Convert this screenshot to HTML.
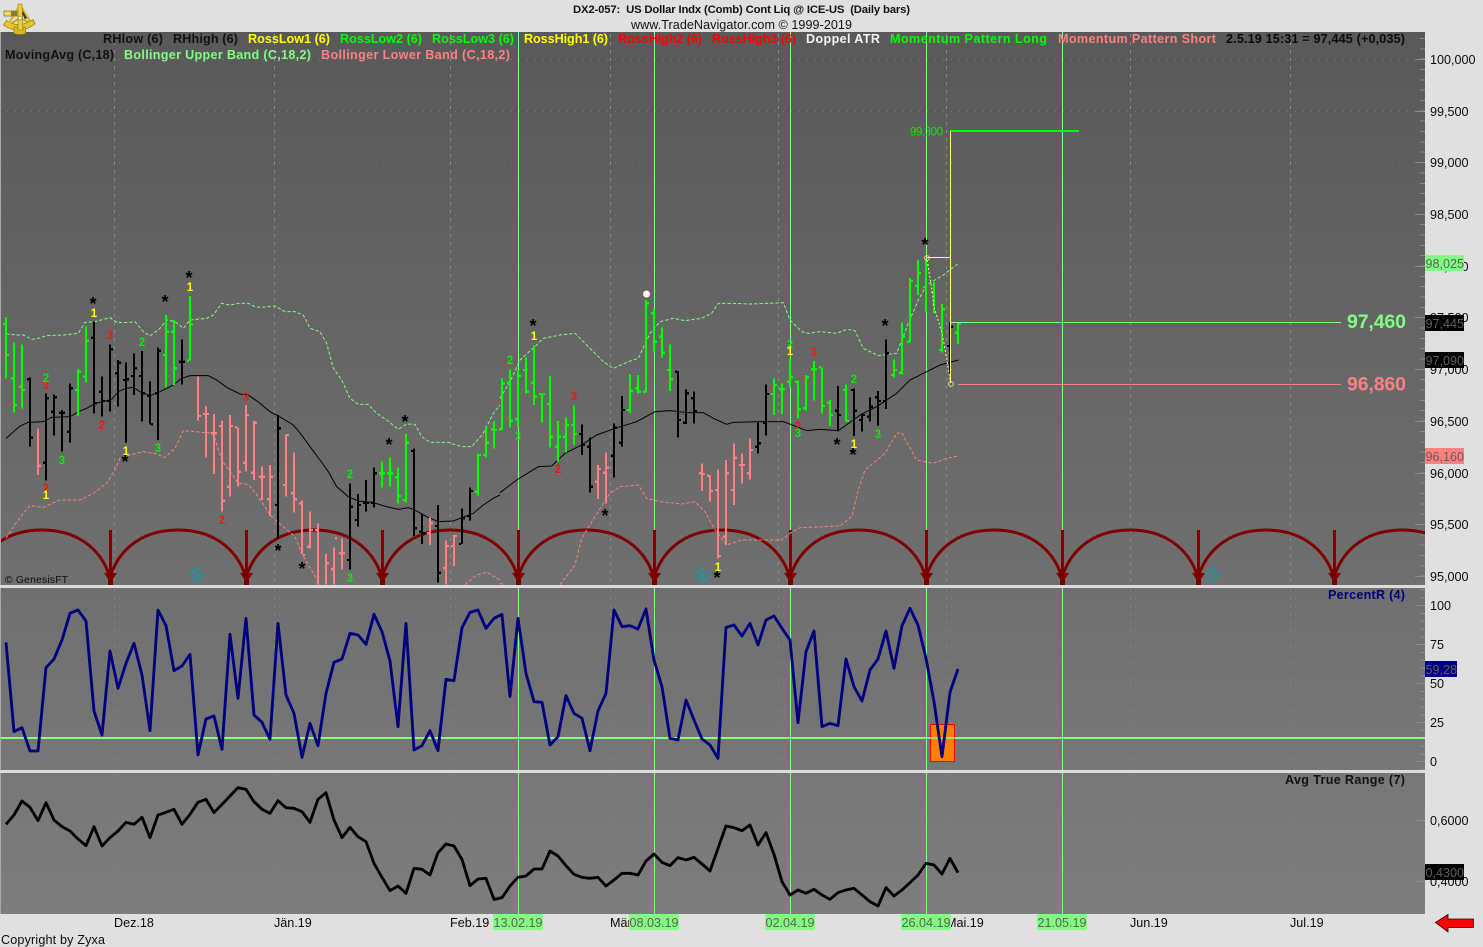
<!DOCTYPE html>
<html lang="en">
<head>
<meta charset="utf-8">
<title>DX2-057 US Dollar Indx Daily bars</title>
<style>
html,body{margin:0;padding:0;background:#e0e0e0;width:1483px;height:947px;overflow:hidden}
svg{display:block;position:absolute;left:0;top:0}
text{font-family:"Liberation Sans",Arial,sans-serif;fill:#000}
.ax{font-size:12.6px;fill:#0a0a0a}
.lg{font-size:12.6px;font-weight:bold}
.fl{font-size:12.6px;fill:#5e5e5e}
.dt{font-size:12.6px;fill:#5e5e5e;text-anchor:middle}
.st{font-size:18px;font-weight:bold;fill:#000;text-anchor:middle}
.d{font-size:11.5px;font-weight:bold;text-anchor:middle}
.y{fill:#ffff00}.g{fill:#00f000}.r{fill:#ff1010}
</style>
</head>
<body>
<svg width="1483" height="947" viewBox="0 0 1483 947" xmlns="http://www.w3.org/2000/svg">
<defs>
<linearGradient id="bg" x1="0" y1="32" x2="0" y2="914" gradientUnits="userSpaceOnUse">
<stop offset="0" stop-color="#595959"/><stop offset="1" stop-color="#7d7d7d"/>
</linearGradient>
<clipPath id="p1"><rect x="1" y="32" width="1424" height="553"/></clipPath>
<path id="a" d="M109 530h3v43h5l-4 6v6h-5v-6l-4-6h5z" fill="#800000"/>
</defs>
<rect width="1483" height="947" fill="#e0e0e0"/>
<rect x="0" y="32" width="1" height="882" fill="#a8a8a8"/>
<rect x="1" y="32" width="1424" height="882" fill="url(#bg)"/>

<!-- grid -->
<g fill="none" stroke="#7c7c7c" stroke-dasharray="1 7" shape-rendering="crispEdges">
<path d="M7 59.5H1415M7 111.5H1415M7 162.5H1415M7 214.5H1415M7 266.5H1415M7 317.5H1415M7 369.5H1415M7 421.5H1415M7 473.5H1415M7 524.5H1415M7 576.5H1415"/>
<path stroke="#7e7e7e" d="M7 605.5H1415M7 644.5H1415M7 683.5H1415M7 722.5H1415M7 761.5H1415"/>
<path stroke="#828282" d="M7 820.5H1415"/>
</g>
<g fill="none" stroke="#8c8c8c" stroke-dasharray="3 5" shape-rendering="crispEdges">
<path d="M114.5 34V585M274.5 34V585M450.5 34V585M610.5 34V585M778.5 34V585M946.5 34V585M1130.5 34V585M1290.5 34V585"/>
<path stroke="#808080" d="M114.5 589V770M274.5 589V770M450.5 589V770M610.5 589V770M778.5 589V770M946.5 589V770M1130.5 589V770M1290.5 589V770"/>
<path stroke="#828282" d="M114.5 773V914M274.5 773V914M450.5 773V914M610.5 773V914M778.5 773V914M946.5 773V914M1130.5 773V914M1290.5 773V914"/>
</g>
<g fill="none" stroke="#8c8c8c" shape-rendering="crispEdges">
<path d="M1415 59.5H1425M1415 111.5H1425M1415 162.5H1425M1415 214.5H1425M1415 266.5H1425M1415 317.5H1425M1415 369.5H1425M1415 421.5H1425M1415 473.5H1425M1415 524.5H1425M1415 576.5H1425M1415 605.5H1425M1415 644.5H1425M1415 683.5H1425M1415 722.5H1425M1415 761.5H1425M1415 820.5H1425M1415 881.5H1425"/>
<path stroke-width="5" stroke-dasharray="1 9.34" d="M1422.5 38V585"/>
<path stroke-width="5" stroke-dasharray="1 6.8" d="M1422.5 589.5V770"/>
</g>

<!-- event lines -->
<path d="M518.5 32V914M654.5 32V914M790.5 32V914M926.5 32V914M1062.5 32V914" stroke="#80ff80" fill="none" shape-rendering="crispEdges"/>

<g clip-path="url(#p1)">
<!-- arcs -->
<path fill="none" stroke="#800000" stroke-width="3" d="M110 578c-6-22-26-48-68-48s-62 26-68 48M246 578c-6-22-26-48-68-48s-62 26-68 48M382 578c-6-22-26-48-68-48s-62 26-68 48M518 578c-6-22-26-48-68-48s-62 26-68 48M654 578c-6-22-26-48-68-48s-62 26-68 48M790 578c-6-22-26-48-68-48s-62 26-68 48M926 578c-6-22-26-48-68-48s-62 26-68 48M1062 578c-6-22-26-48-68-48s-62 26-68 48M1198 578c-6-22-26-48-68-48s-62 26-68 48M1334 578c-6-22-26-48-68-48s-62 26-68 48M1470 578c-6-22-26-48-68-48s-62 26-68 48"/>
<use href="#a"/><use href="#a" x="136"/><use href="#a" x="272"/><use href="#a" x="408"/><use href="#a" x="544"/><use href="#a" x="680"/><use href="#a" x="816"/><use href="#a" x="952"/><use href="#a" x="1088"/><use href="#a" x="1224"/>

<!-- left half: zoom coordinates -->
<g transform="translate(0 290) scale(.33333)" fill="none">
<polyline stroke="#80ff80" stroke-width="3" stroke-dasharray="10 6" points="18,132 50,135 70,135 95,148 115,145 140,137 190,135 235,130 255,97 285,95 330,83 350,97 385,98 405,95 430,125 450,138 480,115 500,90 525,95 550,115 570,90 620,85 640,75 665,40 690,45 715,40 745,40 765,50 785,52 825,48 855,65 885,65 910,75 930,115 960,125 980,160 1000,235 1025,270 1050,325 1075,343 1105,343 1130,370 1160,390 1195,418 1220,402 1245,403 1265,440 1290,457 1345,457 1385,470 1415,470 1450,430 1480,370 1500,345"/>
<polyline stroke="#ff8080" stroke-width="3" stroke-dasharray="10 6" points="18,745 40,710 70,670 90,647 130,652 180,630 240,630 280,610 320,580 345,540 360,505 400,492 430,485 470,492 495,503 525,475 550,422 610,427 640,430 665,510 690,545 715,580 745,583 775,620 810,675 850,710 885,740 905,790 940,850 960,884"/>
<polyline stroke="#ff8080" stroke-width="3" stroke-dasharray="10 6" points="1395,884 1430,855 1460,847 1500,870"/>
<polyline stroke="#000" stroke-width="3" points="18,445 35,430 60,408 85,397 130,395 155,382 210,380 235,365 260,355 285,340 310,335 335,328 355,305 378,295 400,292 420,305 450,317 480,305 520,285 545,265 570,257 625,257 650,270 680,292 720,312 745,315 780,340 810,365 835,378 880,405 905,435 930,470 960,510 985,545 1010,590 1045,620 1075,633 1120,638 1160,650 1195,658 1225,653 1245,660 1280,680 1315,695 1360,693 1385,683 1420,670 1450,645 1480,625 1500,615"/>
<g stroke-width="6.6" shape-rendering="crispEdges">
<path stroke="#ff8080" d="M114 415V555M117 527h6M594 260V392M597 378h6M618 348V503M609 372h6M621 372h6M642 372V552M633 430h6M645 430h6M666 392V665M657 408h6M669 632h6M690 375V620M681 590h6M693 408h6M714 412V590M705 412h6M717 545h6M738 345V545M729 518h6M741 375h6M762 393V570M753 548h6M765 398h6M786 530V630M777 560h6M789 560h6M810 525V678M801 628h6M813 560h6M858 433V620M849 585h6M861 435h6M882 487V668M873 610h6M885 628h6M906 632V792M897 640h6M909 795h6M930 665V775M921 770h6M933 720h6M954 700V884M945 720h6M978 792V884M981 820h6M1002 772V884M993 838h6M1005 745h6M1026 745V838M1017 790h6M1029 790h6M1290 682V765M1293 700h6M1281 730h6M1338 752V884M1329 835h6M1341 768h6M1362 735V828M1353 768h6M1365 738h6"/>
<path stroke="#00ff00" d="M18 82V265M9 102h6M21 195h6M42 157V368M33 265h6M45 345h6M66 163V356M57 290h6M69 300h6M234 238V378M225 300h6M237 245h6M258 110V278M249 260h6M261 152h6M498 75V293M489 195h6M501 125h6M522 90V285M513 125h6M525 235h6M570 18V212M561 212h6M573 103h6M1146 515V593M1137 550h6M1149 550h6M1170 502V590M1161 550h6M1173 550h6M1194 533V640M1185 562h6M1197 618h6M1218 432V638M1209 630h6M1221 458h6M1434 490V617M1425 605h6M1437 495h6M1458 408V502M1449 495h6M1461 458h6M1482 395V475M1473 418h6M1485 420h6"/>
<path stroke="#000" d="M90 262V470M81 268h6M93 443h6M138 310V572M129 518h6M141 325h6M162 313V437M153 365h6M165 322h6M186 360V485M177 368h6M189 368h6M210 280V458M201 425h6M213 295h6M282 95V370M273 143h6M285 340h6M306 260V380M297 305h6M309 333h6M330 163V365M321 333h6M333 178h6M354 210V350M345 250h6M357 218h6M378 217V458M369 270h6M381 268h6M402 190V315M393 258h6M405 235h6M426 183V395M417 258h6M429 310h6M450 275V403M441 318h6M453 403h6M474 172V450M465 310h6M477 182h6M546 148V283M537 215h6M549 215h6M834 375V745M825 645h6M837 415h6M1050 580V838M1041 810h6M1053 650h6M1074 612V710M1065 690h6M1077 645h6M1098 570V665M1089 638h6M1101 638h6M1122 532V653M1113 638h6M1125 550h6M1242 475V738M1233 483h6M1245 715h6M1266 672V762M1257 725h6M1269 730h6M1314 645V878M1305 708h6M1317 848h6M1386 655V762M1377 762h6M1389 685h6M1410 592V692M1401 678h6M1413 603h6"/>
</g>
</g>

<!-- right half: zoom coordinates -->
<g transform="translate(500 290) scale(.33333)" fill="none">
<polyline stroke="#80ff80" stroke-width="3" stroke-dasharray="10 6" points="0,325 30,275 60,210 110,165 130,145 180,135 225,130 265,170 310,215 340,235 385,215 415,205 450,130 480,95 520,85 555,92 605,85 635,70 655,40 700,40 750,42 850,38 870,90 905,125 925,130 960,125 1010,130 1040,118 1065,122 1090,175 1135,197 1190,190 1225,100 1255,30 1280,-15 1330,-45 1375,-80"/>
<polyline stroke="#ff8080" stroke-width="3" stroke-dasharray="10 6" points="0,880 15,884"/>
<polyline stroke="#ff8080" stroke-width="3" stroke-dasharray="10 6" points="180,884 225,825 245,745 285,680 330,610 360,590 415,585 440,625 480,635 545,642 585,635 615,665 645,720 680,765 725,750 845,750 870,730 900,713 1020,708 1055,680 1075,600 1095,540 1155,490 1190,430 1205,428 1250,510 1300,520 1340,505 1375,498"/>
<polyline stroke="#000" stroke-width="3" points="0,608 50,570 115,530 155,528 195,490 245,465 290,435 345,415 410,395 465,365 510,362 560,368 610,368 640,385 680,403 700,397 780,395 850,395 890,410 920,422 960,418 1015,422 1085,372 1130,350 1190,310 1230,270 1280,245 1320,225 1375,210"/>
<g stroke-width="6.6" shape-rendering="crispEdges">
<path stroke="#ff8080" d="M294 525V627M285 575h6M297 537h6M318 487V640M309 548h6M321 533h6M606 520V603M597 550h6M609 552h6M630 555V635M621 557h6M633 603h6M654 538V805M645 600h6M657 798h6M678 510V765M669 740h6M681 550h6M702 460V645M693 600h6M705 503h6M726 490V580M717 525h6M729 525h6M750 445V568M741 550h6M753 480h6"/>
<path stroke="#00ff00" d="M6 265V420M-3 418h6M9 280h6M30 238V412M21 278h6M33 392h6M54 240V412M45 388h6M57 257h6M78 203V310M69 240h6M81 305h6M102 167V345M93 278h6M105 320h6M126 310V398M117 312h6M129 312h6M150 258V473M141 342h6M153 440h6M174 393V515M165 470h6M177 440h6M198 382V487M189 440h6M201 405h6M222 346V465M213 405h6M225 432h6M390 252V368M381 360h6M393 302h6M414 255V310M405 295h6M417 305h6M438 30V308M429 305h6M441 40h6M462 55V186M453 70h6M465 155h6M486 112V203M477 140h6M489 188h6M510 163V303M501 240h6M513 268h6M822 265V375M813 312h6M825 285h6M846 280V372M837 298h6M849 298h6M870 207V292M861 275h6M873 262h6M894 272V385M885 275h6M897 358h6M918 255V362M909 355h6M921 262h6M942 213V332M933 238h6M945 238h6M966 232V370M957 232h6M969 348h6M990 330V408M981 338h6M993 375h6M1038 283V395M1029 300h6M1041 393h6M1182 208V262M1173 255h6M1185 240h6M1206 97V253M1197 248h6M1209 140h6M1230 -36V157M1221 155h6M1233 -27h6M1254 -90V15M1245 -12h6M1257 -51h6M1278 -90V66M1269 -9h6M1281 -75h6M1302 -24V70M1293 6h6M1326 42V188M1317 180h6M1329 58h6M1374 98V162M1365 128h6M1377 100h6"/>
<path stroke="#000" d="M246 403V495M237 432h6M249 465h6M270 442V608M261 470h6M273 590h6M342 400V563M333 497h6M345 413h6M366 318V470M357 458h6M369 360h6M534 243V443M525 245h6M537 390h6M558 298V402M549 398h6M561 310h6M582 305V400M573 325h6M585 363h6M774 397V490M765 470h6M777 460h6M798 283V437M789 398h6M801 312h6M1014 288V425M1005 362h6M1017 375h6M1062 295V438M1053 300h6M1065 362h6M1086 370V425M1077 390h6M1089 375h6M1110 322V395M1101 380h6M1113 350h6M1134 303V407M1125 322h6M1137 333h6M1158 148V357M1149 333h6M1161 190h6M1350 97V255M1341 168h6M1353 110h6"/>
</g>
</g>
</g>

<!-- projection lines -->
<path d="M950 131H1079" stroke="#00ff00" stroke-width="2" fill="none" shape-rendering="crispEdges"/>
<path d="M950.5 131V383M927 257.5H950" stroke="#ffff80" fill="none" shape-rendering="crispEdges"/>
<path d="M950 322.5H1341" stroke="#80ff80" fill="none" shape-rendering="crispEdges"/>
<path d="M958 384.5H1341" stroke="#ff8080" fill="none" shape-rendering="crispEdges"/>
<polyline points="927,260 932,290 934,307 942,333 947,360 950,380" fill="none" stroke="#ffff80" stroke-dasharray="2 2"/>
<circle cx="927" cy="258" r="2.4" fill="none" stroke="#e8e878"/>
<circle cx="951" cy="384" r="2.4" fill="none" stroke="#e8e878"/>
<circle cx="646.5" cy="294" r="3.5" fill="#fff"/>
<text x="910" y="135.500" textLength="33" style="font-size:11.500px;fill:#00f000">99,300</text>

<!-- digits -->
<g>
<text class="d r" x="46" y="389">3</text>
<text class="d r" x="110" y="339">3</text>
<text class="d r" x="246" y="401">3</text>
<text class="d r" x="102" y="429">2</text>
<text class="d r" x="46" y="492">2</text>
<text class="d r" x="222" y="524">2</text>
<text class="d r" x="574" y="400">3</text>
<text class="d r" x="814" y="356">3</text>
<text class="d r" x="558" y="473">2</text>
<text class="d r" x="798" y="430">2</text>
<text class="d g" x="46" y="382">2</text>
<text class="d g" x="142" y="346">2</text>
<text class="d g" x="350" y="478">2</text>
<text class="d g" x="510" y="364">2</text>
<text class="d g" x="790" y="348">2</text>
<text class="d g" x="854" y="383">2</text>
<text class="d g" x="62" y="464">3</text>
<text class="d g" x="158" y="452">3</text>
<text class="d g" x="350" y="582">3</text>
<text class="d g" x="518" y="440">3</text>
<text class="d g" x="798" y="437">3</text>
<text class="d g" x="878" y="438">3</text>
<text class="st" x="93" y="310">*</text>
<text class="st" x="165" y="308">*</text>
<text class="st" x="189" y="284">*</text>
<text class="st" x="125" y="468">*</text>
<text class="st" x="278" y="557">*</text>
<text class="st" x="302" y="575">*</text>
<text class="st" x="389" y="451">*</text>
<text class="st" x="405" y="428">*</text>
<text class="st" x="533" y="332">*</text>
<text class="st" x="605" y="522">*</text>
<text class="st" x="837" y="451">*</text>
<text class="st" x="853" y="461">*</text>
<text class="st" x="885" y="332">*</text>
<text class="st" x="717" y="584">*</text>
<text class="st" x="925" y="251">*</text>
<text class="d y" x="94" y="317">1</text>
<text class="d y" x="190" y="291">1</text>
<text class="d y" x="46" y="499">1</text>
<text class="d y" x="126" y="455">1</text>
<text class="d y" x="534" y="340">1</text>
<text class="d y" x="790" y="355">1</text>
<text class="d y" x="854" y="448">1</text>
<text class="d y" x="718" y="571">1</text>
</g>

<!-- diamonds -->
<g fill="none" stroke="#00a8b4">
<path d="M197 567.5l7.5 7.5-7.5 7.5-7.5-7.5z"/>
<path d="M702 567.5l7.5 7.5-7.5 7.5-7.5-7.5z"/>
<path d="M1213 567.5l7.5 7.5-7.5 7.5-7.5-7.5z"/>
</g>
<g style="font-size:10px;text-anchor:middle">
<text x="197" y="579" style="fill:#00a8b4;font-family:'Liberation Serif',serif">R</text>
<text x="702" y="579" style="fill:#00a8b4;font-family:'Liberation Serif',serif">R</text>
<text x="1213" y="579" style="fill:#00a8b4">?</text>
</g>
<text x="5" y="583" textLength="63" style="font-size:10.300px;fill:#0c0c0c">© GenesisFT</text>

<!-- legend -->
<text class="lg" x="103" y="43" textLength="60" style="fill:#111">RHlow (6)</text>
<text class="lg" x="173" y="43" textLength="65" style="fill:#111">RHhigh (6)</text>
<text class="lg" x="248" y="43" textLength="82" style="fill:#ffff00">RossLow1 (6)</text>
<text class="lg" x="340" y="43" textLength="82" style="fill:#00ff00">RossLow2 (6)</text>
<text class="lg" x="432" y="43" textLength="82" style="fill:#00ff00">RossLow3 (6)</text>
<text class="lg" x="524" y="43" textLength="84" style="fill:#ffff00">RossHigh1 (6)</text>
<text class="lg" x="618" y="43" textLength="84" style="fill:#ff0000">RossHigh2 (6)</text>
<text class="lg" x="712" y="43" textLength="84" style="fill:#ff0000">RossHigh3 (6)</text>
<text class="lg" x="806" y="43" textLength="74" style="fill:#f4f4f4">Doppel ATR</text>
<text class="lg" x="890" y="43" textLength="157" style="fill:#00ff00">Momentum Pattern Long</text>
<text class="lg" x="1058" y="43" textLength="158" style="fill:#ff8080">Momentum Pattern Short</text>
<text class="lg" x="1226" y="43" textLength="179" style="fill:#0a0a0a">2.5.19 15:31 = 97,445 (+0,035)</text>
<text class="lg" x="5" y="59" textLength="109" style="fill:#111">MovingAvg (C,18)</text>
<text class="lg" x="124" y="59" textLength="187" style="fill:#80ff80">Bollinger Upper Band (C,18,2)</text>
<text class="lg" x="321" y="59" textLength="189" style="fill:#ff8080">Bollinger Lower Band (C,18,2)</text>

<!-- big values -->
<text x="1347" y="328" textLength="59" style="font-size:19.5px;font-weight:bold;fill:#80ff80">97,460</text>
<text x="1347" y="390.5" textLength="59" style="font-size:19.5px;font-weight:bold;fill:#ff8080">96,860</text>

<!-- pane 2 -->
<path d="M1 738H1425" stroke="#80ff80" stroke-width="2" fill="none" shape-rendering="crispEdges"/>
<rect x="930.5" y="724.5" width="24" height="37" fill="#ff8000" stroke="#ff0000"/>
<path d="M926 738H958" stroke="#80ff80" stroke-width="2" fill="none" opacity=".8" shape-rendering="crispEdges"/>
<g transform="translate(0 585) scale(.33333)" fill="none" stroke="#000080" stroke-width="8.6" stroke-linejoin="round">
<polyline points="18,172 42,440 66,428 90,498 114,498 138,248 162,222 186,165 210,85 234,75 258,108 282,378 306,450 330,198 354,310 378,235 402,175 426,270 450,437 474,75 498,122 522,257 546,243 570,208 594,510 618,402 642,393 666,493 690,148 714,340 738,100 762,390 786,412 810,463 834,115 858,330 882,385 906,517 930,415 954,482 978,325 1002,232 1026,222 1050,145 1074,150 1098,178 1122,88 1146,140 1170,228 1194,425 1218,115 1242,495 1266,482 1290,437 1314,497 1338,283 1362,287 1386,128 1410,82 1434,75 1458,130 1482,100 1506,88 1530,335 1554,100 1578,265 1602,350 1626,352 1650,480 1674,455 1698,332 1722,385 1746,400 1770,497 1794,378 1818,325 1842,75 1866,125 1890,122 1914,132 1938,72 1962,225 1986,305 2010,460 2034,465 2058,345 2082,405 2106,462 2130,480 2154,520 2178,127 2202,120 2226,153 2250,115 2274,180 2298,105 2322,93 2346,130 2370,165 2394,413 2418,200 2442,138 2466,425 2490,415 2514,422 2538,222 2562,305 2586,348 2610,255 2634,222 2658,138 2682,250 2706,122 2730,70 2754,120 2778,220 2802,350 2826,515 2850,322 2874,252"/>
</g>
<!-- pane 3 -->
<g transform="translate(0 770) scale(.33333)" fill="none" stroke="#000" stroke-width="8.6" stroke-linejoin="round">
<polyline points="18,163 42,135 66,93 90,112 114,152 138,98 162,150 186,170 210,183 234,207 258,227 282,170 306,228 330,203 354,183 378,157 402,163 426,142 450,203 474,135 498,127 522,118 546,163 570,133 594,97 618,88 642,128 666,103 690,78 714,53 738,58 762,95 786,118 810,130 834,92 858,113 882,115 906,125 930,157 954,88 978,68 1002,150 1026,203 1050,172 1074,200 1098,215 1122,280 1146,322 1170,362 1194,348 1218,370 1242,295 1266,298 1290,315 1314,248 1338,222 1362,228 1386,268 1410,347 1434,327 1458,325 1482,388 1506,383 1530,348 1554,322 1578,318 1602,297 1626,297 1650,243 1674,258 1698,287 1722,313 1746,322 1770,325 1794,322 1818,348 1842,330 1866,310 1890,310 1914,315 1938,273 1962,252 1986,277 2010,287 2034,263 2058,270 2082,262 2106,282 2130,303 2154,235 2178,168 2202,173 2226,182 2250,165 2274,225 2298,188 2322,253 2346,335 2370,375 2394,360 2418,370 2442,358 2466,375 2490,388 2514,368 2538,360 2562,355 2586,375 2610,395 2634,408 2658,353 2682,378 2706,360 2730,338 2754,315 2778,280 2802,285 2826,312 2850,265 2874,308"/>
</g>

<text class="lg" x="1328" y="599" textLength="77" style="fill:#000080">PercentR (4)</text>
<text class="lg" x="1285" y="784" textLength="120" style="fill:#111">Avg True Range (7)</text>

<!-- separators -->
<rect x="0" y="585" width="1425" height="3" fill="#dcdcdc"/>
<rect x="0" y="770" width="1425" height="3" fill="#dcdcdc"/>

<!-- axis labels -->
<g class="ax">
<text class="ax" x="1430" y="64">100,000</text>
<text class="ax" x="1430" y="116">99,500</text>
<text class="ax" x="1430" y="167">99,000</text>
<text class="ax" x="1430" y="219">98,500</text>
<text class="ax" x="1430" y="271">98,000</text>
<text class="ax" x="1430" y="322">97,500</text>
<text class="ax" x="1430" y="374">97,000</text>
<text class="ax" x="1430" y="426">96,500</text>
<text class="ax" x="1430" y="478">96,000</text>
<text class="ax" x="1430" y="529">95,500</text>
<text class="ax" x="1430" y="581">95,000</text>
<text class="ax" x="1430" y="610">100</text>
<text class="ax" x="1430" y="649">75</text>
<text class="ax" x="1430" y="688">50</text>
<text class="ax" x="1430" y="727">25</text>
<text class="ax" x="1430" y="766">0</text>
<text class="ax" x="1430" y="825">0,6000</text>
<text class="ax" x="1430" y="886">0,4000</text>
<text class="ax" x="114" y="927">Dez.18</text>
<text class="ax" x="274" y="927">Jän.19</text>
<text class="ax" x="450" y="927">Feb.19</text>
<text class="ax" x="610" y="927">Mär.19</text>
<text class="ax" x="946" y="927">Mai.19</text>
<text class="ax" x="1130" y="927">Jun.19</text>
<text class="ax" x="1290" y="927">Jul.19</text>
</g>

<!-- price flags -->
<rect x="1425" y="255" width="39" height="16" fill="#80ff80"/>
<text class="fl" x="1425.5" y="268">98,025</text>
<rect x="1425" y="315" width="39" height="16" fill="#000"/>
<text class="fl" x="1425.5" y="328">97,445</text>
<rect x="1425" y="352" width="39" height="16" fill="#000"/>
<text class="fl" x="1425.5" y="365">97,090</text>
<rect x="1425" y="448" width="39" height="16" fill="#ff8080"/>
<text class="fl" x="1425.5" y="461">96,160</text>
<rect x="1425" y="661" width="32" height="16" fill="#000080"/>
<text class="fl" x="1425.5" y="674">59,28</text>
<rect x="1425" y="864" width="39" height="16" fill="#000"/>
<text class="fl" x="1425.5" y="877">0,4300</text>

<!-- date flags -->
<rect x="493" y="914" width="50" height="16" fill="#80ff80"/>
<text class="dt" x="518" y="927">13.02.19</text>
<rect x="629" y="914" width="50" height="16" fill="#80ff80"/>
<text class="dt" x="654" y="927">08.03.19</text>
<rect x="765" y="914" width="50" height="16" fill="#80ff80"/>
<text class="dt" x="790" y="927">02.04.19</text>
<rect x="901" y="914" width="50" height="16" fill="#80ff80"/>
<text class="dt" x="926" y="927">26.04.19</text>
<rect x="1037" y="914" width="50" height="16" fill="#80ff80"/>
<text class="dt" x="1062" y="927">21.05.19</text>

<!-- header -->
<text x="573" y="13" textLength="337" style="font-size:11.3px;font-weight:bold;fill:#111">DX2-057:&#160; US Dollar Indx (Comb) Cont Liq @ ICE-US&#160; (Daily bars)</text>
<text x="631" y="29" textLength="221" style="font-size:12.6px;fill:#111">www.TradeNavigator.com © 1999-2019</text>
<text x="1" y="944" textLength="104" style="font-size:12.6px;fill:#0a0a0a">Copyright by Zyxa</text>

<!-- back arrow -->
<path d="M1435.5 922.5l12.5-8v4.500h25.500v8.500h-25.500v4.500z" fill="#ff0000" stroke="#300000" stroke-width=".8"/>

<!-- logo -->
<g>
<path d="M3.500 25Q19 36 35 24L33 19.500Q19 29 6.500 20.500Z" fill="#e6c62a" stroke="#8a7212" stroke-width=".7"/>
<path d="M14 27h11l1 6.500Q20 35.500 14 33.500Z" fill="#d9b820" stroke="#8a7212" stroke-width=".6"/>
<path d="M19 7L9 23M21 7L30 21" stroke="#d8ba28" stroke-width="2.400" fill="none"/>
<path d="M12 23l8-5 8 4" stroke="#caa818" stroke-width="2" fill="none"/>
<path d="M18 4h4l1 26h-5z" fill="#eccf3a" stroke="#8a7212" stroke-width=".6"/>
<rect x="4" y="11" width="13" height="5" fill="#f0dc60" stroke="#7d6a18" stroke-width=".7"/>
<rect x="11" y="11.500" width="6" height="4" fill="#8c7a28"/>
<path d="M23 11l4 7-2 1.500-3-6z" fill="#3e3a20"/>
<circle cx="20" cy="18" r="2" fill="#fff2a0" stroke="#8a7212" stroke-width=".5"/>
</g>
</svg>
</body>
</html>
